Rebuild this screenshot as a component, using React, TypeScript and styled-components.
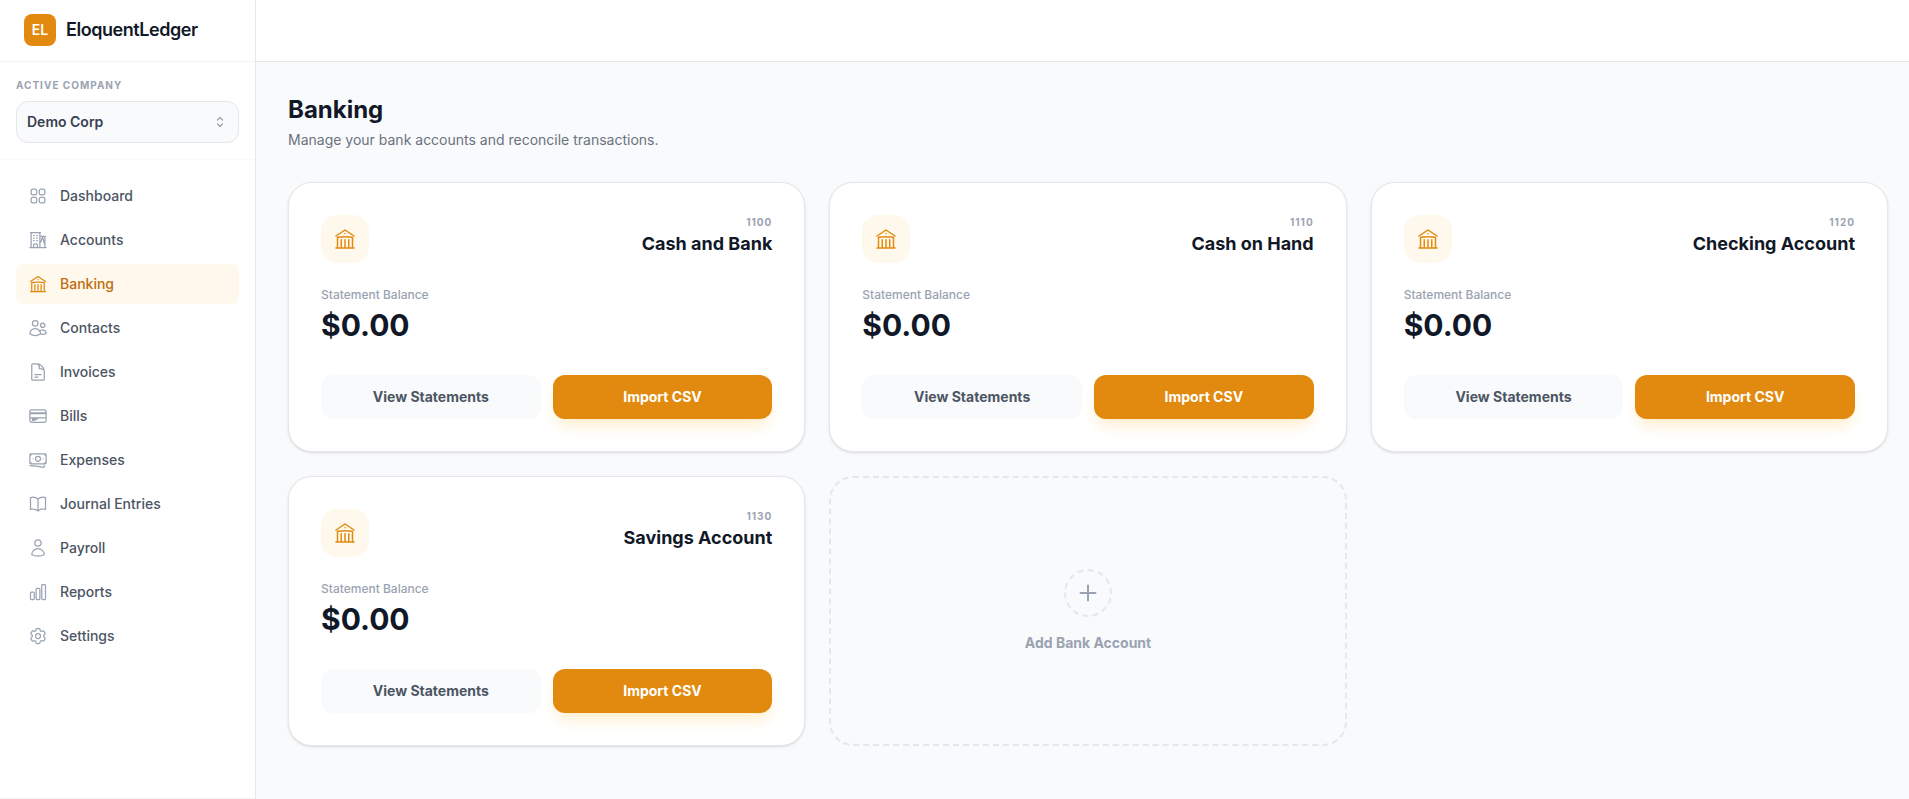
import React from "react";
import styled, { createGlobalStyle, css } from "styled-components";
import {
  HiOutlineSquares2X2,
  HiOutlineBuildingLibrary,
  HiOutlineUsers,
  HiOutlineDocumentText,
  HiOutlineBanknotes,
  HiOutlineBookOpen,
  HiOutlineUser,
  HiOutlineChartBar,
  HiOutlineCog6Tooth,
} from "react-icons/hi2";

const color = {
  brand: "#e28a0f",
  brandDark: "#bf6c0b",
  brandSoft: "#fff8ec",
  brandGlow: "#ffefd2",
  ink: "#111827",
  text: "#374151",
  textSoft: "#4b5563",
  muted: "#6b7280",
  faint: "#9aa3b2",
  border: "#e5e7eb",
  borderSoft: "#f3f4f6",
  surface: "#f9fafc",
};

const GlobalStyle = createGlobalStyle`
  *, *::before, *::after { box-sizing: border-box; }
  body {
    margin: 0;
    background: ${color.surface};
    color: ${color.ink};
    font-family: Inter, "Liberation Sans", sans-serif;
    font-size: 14px;
    line-height: 20px;
  }
  h1, h2, p, ul { margin: 0; padding: 0; }
  button, select { font: inherit; }
  button { cursor: pointer; }
`;

const Shell = styled.div`
  display: flex;
  min-height: 100vh;
`;

const Sidebar = styled.aside`
  display: flex;
  flex-direction: column;
  flex: 0 0 256px;
  background: #fff;
  border-right: 1px solid ${color.border};
`;

const Brand = styled.div`
  display: flex;
  align-items: center;
  gap: 10px;
  padding: 14px 24px 15px;
  border-bottom: 1px solid ${color.borderSoft};
`;

const BrandMark = styled.span`
  display: grid;
  place-items: center;
  width: 32px;
  height: 32px;
  border-radius: 8px;
  background: ${color.brand};
  color: #fff;
  font-weight: 600;
`;

const BrandName = styled.span`
  font-size: 18px;
  line-height: 28px;
  font-weight: 600;
  letter-spacing: -0.025em;
`;

const Company = styled.div`
  display: flex;
  flex-direction: column;
  gap: 8px;
  padding: 16px;
  border-bottom: 1px solid ${color.surface};
`;

const CompanyLabel = styled.label`
  color: ${color.faint};
  font-size: 10px;
  line-height: 15px;
  font-weight: 700;
  letter-spacing: 0.1em;
  text-transform: uppercase;
`;

const SelectBox = styled.div`
  display: grid;
  align-items: center;

  > * { grid-area: 1 / 1; }
  > svg {
    justify-self: end;
    margin-right: 11px;
    color: ${color.faint};
    pointer-events: none;
  }
`;

const CompanySelect = styled.select`
  appearance: none;
  width: 100%;
  height: 42px;
  padding: 0 32px 0 10px;
  border: 1px solid ${color.border};
  border-radius: 12px;
  background: ${color.surface};
  color: ${color.text};
  font-weight: 600;
`;

const Nav = styled.nav`
  flex: 1;
  padding: 16px;

  ul {
    display: flex;
    flex-direction: column;
    gap: 4px;
    list-style: none;
  }
`;

const NavLink = styled.a<{ $active?: boolean }>`
  display: flex;
  align-items: center;
  gap: 12px;
  padding: 10px 12px;
  border-radius: 8px;
  color: ${color.textSoft};
  font-weight: 500;
  text-decoration: none;

  svg { color: ${color.faint}; }

  ${({ $active }) =>
    $active &&
    css`
      background: ${color.brandSoft};
      color: ${color.brandDark};
      svg { color: ${color.brand}; }
    `}
`;

const SidebarFooter = styled.div`
  border-top: 1px solid ${color.borderSoft};
`;

const Content = styled.div`
  flex: 1;
  min-width: 0;
`;

const TopBar = styled.header`
  height: 62px;
  background: #fff;
  border-bottom: 1px solid ${color.border};
`;

const Main = styled.main`
  padding: 32px 21px 32px 32px;
`;

const PageHeader = styled.div`
  display: flex;
  flex-direction: column;
  gap: 4px;
  margin-bottom: 32px;
`;

const PageTitle = styled.h1`
  font-size: 24px;
  line-height: 32px;
  font-weight: 700;
`;

const PageSubtitle = styled.p`
  color: ${color.muted};
`;

const Grid = styled.div`
  display: grid;
  grid-template-columns: repeat(3, minmax(0, 1fr));
  gap: 24px;
`;

const Card = styled.article`
  padding: 32px;
  border: 1px solid ${color.border};
  border-radius: 24px;
  background: #fff;
  box-shadow: 0 1px 3px rgba(0, 0, 0, 0.1), 0 1px 2px -1px rgba(0, 0, 0, 0.1);
`;

const CardHead = styled.div`
  display: flex;
  justify-content: space-between;
  margin-bottom: 24px;
`;

const IconTile = styled.span`
  display: grid;
  place-items: center;
  width: 48px;
  height: 48px;
  border-radius: 16px;
  background: ${color.brandSoft};
  color: ${color.brand};
`;

const CardTitle = styled.div`
  text-align: right;
`;

const Code = styled.p`
  color: ${color.faint};
  font-size: 10px;
  line-height: 15px;
  font-weight: 700;
  letter-spacing: 0.1em;
`;

const AccountName = styled.h2`
  font-size: 18px;
  line-height: 28px;
  font-weight: 700;
`;

const Balance = styled.div`
  display: flex;
  flex-direction: column;
  gap: 4px;
  margin-bottom: 32px;
`;

const BalanceLabel = styled.p`
  color: ${color.faint};
  font-size: 12px;
  line-height: 16px;
  font-weight: 500;
`;

const Amount = styled.p`
  font-size: 30px;
  line-height: 36px;
  font-weight: 700;
`;

const Actions = styled.div`
  display: flex;
  gap: 12px;
`;

const Button = styled.button<{ $primary?: boolean }>`
  flex: 1;
  padding: 12px;
  border: 0;
  border-radius: 12px;
  background: ${({ $primary }) => ($primary ? color.brand : color.surface)};
  color: ${({ $primary }) => ($primary ? "#fff" : color.textSoft)};
  font-weight: 700;
  box-shadow: ${({ $primary }) =>
    $primary
      ? `0 10px 15px -3px ${color.brandGlow}, 0 4px 6px -4px ${color.brandGlow}`
      : "none"};
`;

const AddCard = styled.button`
  display: flex;
  flex-direction: column;
  align-items: center;
  justify-content: center;
  gap: 16px;
  padding: 32px;
  border: 2px dashed ${color.border};
  border-radius: 24px;
  background: transparent;
  color: ${color.faint};
  font-weight: 700;
`;

const AddCircle = styled.span`
  display: grid;
  place-items: center;
  width: 48px;
  height: 48px;
  border: 2px dashed ${color.border};
  border-radius: 50%;
`;

type IconProps = { size: number };

function StrokeIcon({ size, d, weight = 1.5 }: IconProps & { d: string; weight?: number }) {
  return (
    <svg
      width={size}
      height={size}
      viewBox="0 0 24 24"
      fill="none"
      stroke="currentColor"
      strokeWidth={weight}
      strokeLinecap="round"
      strokeLinejoin="round"
      aria-hidden="true"
    >
      <path d={d} />
    </svg>
  );
}

const BuildingsIcon = ({ size }: IconProps) => (
  <StrokeIcon
    size={size}
    d="M2.25 21h19.5m-18-18v18m10.5-18v18m6-13.5V21M6.75 6.75h.75m-.75 3h.75m-.75 3h.75m3-6h.75m-.75 3h.75m-.75 3h.75M6.75 21v-3.375c0-.621.504-1.125 1.125-1.125h2.25c.621 0 1.125.504 1.125 1.125V21M3 3h12m-.75 4.5H21M15.25 14.5l2.25-6 1 3.5 1.25 4.5"
  />
);

const CardIcon = ({ size }: IconProps) => (
  <StrokeIcon
    size={size}
    d="M2.25 8.25h19.5M2.25 9h19.5m-19.5 5.25h19.5m-16.5 1.5h6m-6 1.5h3M4.5 19.5h15a2.25 2.25 0 0 0 2.25-2.25V6.75A2.25 2.25 0 0 0 19.5 4.5h-15a2.25 2.25 0 0 0-2.25 2.25v10.5A2.25 2.25 0 0 0 4.5 19.5Z"
  />
);

const ChevronsIcon = ({ size }: IconProps) => (
  <StrokeIcon
    size={size}
    weight={2}
    d="M8.25 15 12 18.75 15.75 15m-7.5-6L12 5.25 15.75 9"
  />
);

const PlusIcon = ({ size }: IconProps) => (
  <StrokeIcon size={size} weight={2} d="M12 4.5v15m7.5-7.5h-15" />
);

const navItems: { label: string; icon: React.ComponentType<IconProps> }[] = [
  { label: "Dashboard", icon: HiOutlineSquares2X2 },
  { label: "Accounts", icon: BuildingsIcon },
  { label: "Banking", icon: HiOutlineBuildingLibrary },
  { label: "Contacts", icon: HiOutlineUsers },
  { label: "Invoices", icon: HiOutlineDocumentText },
  { label: "Bills", icon: CardIcon },
  { label: "Expenses", icon: HiOutlineBanknotes },
  { label: "Journal Entries", icon: HiOutlineBookOpen },
  { label: "Payroll", icon: HiOutlineUser },
  { label: "Reports", icon: HiOutlineChartBar },
  { label: "Settings", icon: HiOutlineCog6Tooth },
];

const accounts = [
  { code: "1100", name: "Cash and Bank", balance: "$0.00" },
  { code: "1110", name: "Cash on Hand", balance: "$0.00" },
  { code: "1120", name: "Checking Account", balance: "$0.00" },
  { code: "1130", name: "Savings Account", balance: "$0.00" },
];

function AccountCard({ code, name, balance }: (typeof accounts)[number]) {
  return (
    <Card>
      <CardHead>
        <IconTile>
          <HiOutlineBuildingLibrary size={24} />
        </IconTile>
        <CardTitle>
          <Code>{code}</Code>
          <AccountName>{name}</AccountName>
        </CardTitle>
      </CardHead>
      <Balance>
        <BalanceLabel>Statement Balance</BalanceLabel>
        <Amount>{balance}</Amount>
      </Balance>
      <Actions>
        <Button type="button">View Statements</Button>
        <Button type="button" $primary>
          Import CSV
        </Button>
      </Actions>
    </Card>
  );
}

export default function App() {
  return (
    <>
      <GlobalStyle />
      <Shell>
        <Sidebar>
          <Brand>
            <BrandMark>EL</BrandMark>
            <BrandName>EloquentLedger</BrandName>
          </Brand>
          <Company>
            <CompanyLabel htmlFor="company">Active Company</CompanyLabel>
            <SelectBox>
              <CompanySelect id="company">
                <option>Demo Corp</option>
              </CompanySelect>
              <ChevronsIcon size={16} />
            </SelectBox>
          </Company>
          <Nav>
            <ul>
              {navItems.map(({ label, icon: Icon }) => (
                <li key={label}>
                  <NavLink
                    href="#"
                    $active={label === "Banking"}
                    aria-current={label === "Banking" ? "page" : undefined}
                  >
                    <Icon size={20} />
                    {label}
                  </NavLink>
                </li>
              ))}
            </ul>
          </Nav>
          <SidebarFooter />
        </Sidebar>
        <Content>
          <TopBar />
          <Main>
            <PageHeader>
              <PageTitle>Banking</PageTitle>
              <PageSubtitle>Manage your bank accounts and reconcile transactions.</PageSubtitle>
            </PageHeader>
            <Grid>
              {accounts.map((account) => (
                <AccountCard key={account.code} {...account} />
              ))}
              <AddCard type="button">
                <AddCircle>
                  <PlusIcon size={24} />
                </AddCircle>
                Add Bank Account
              </AddCard>
            </Grid>
          </Main>
        </Content>
      </Shell>
    </>
  );
}
